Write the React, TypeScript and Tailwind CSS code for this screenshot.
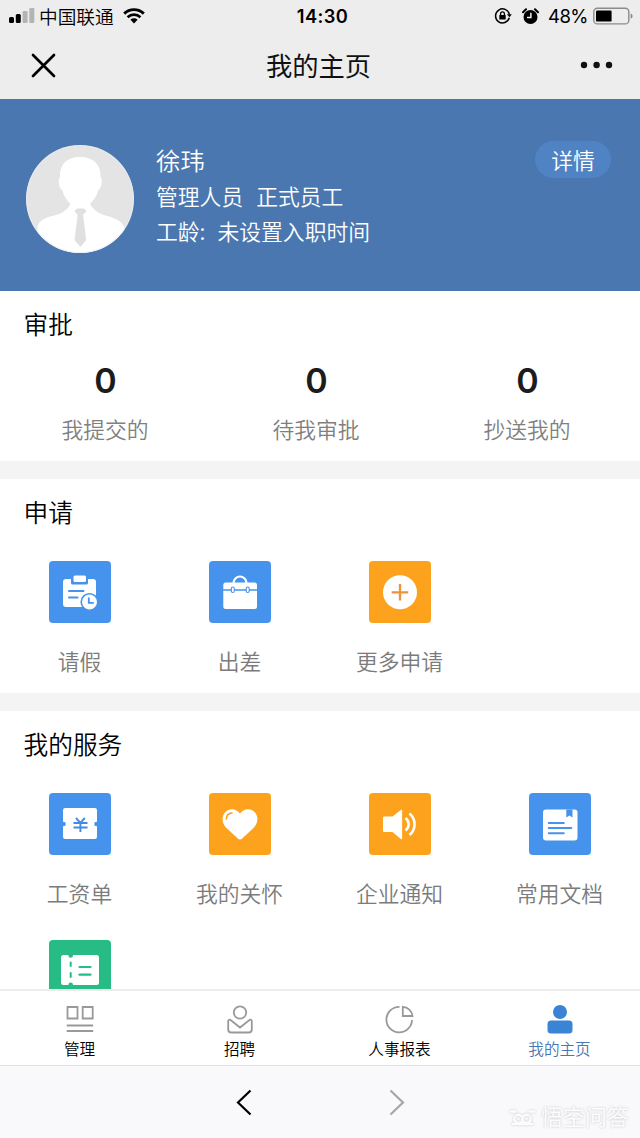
import type { ReactNode } from 'react';

const BLUE = '#4593ec';
const ORANGE = '#fca21d';

function StatusBar() {
  return (
    <div className="flex h-8 items-center justify-between pl-[9px] pr-[7px] text-black">
      <div className="flex w-[200px] items-center">
        <svg width="26" height="16" viewBox="0 0 26 16">
          <rect x="0" y="9" width="5" height="6" rx="1.5" fill="#000" />
          <rect x="6.8" y="6" width="5" height="9" rx="1.5" fill="#000" />
          <rect x="13.6" y="3" width="5" height="12" rx="1.2" fill="#b4b4b4" />
          <rect x="20.3" y="0" width="5" height="15" rx="1.2" fill="#b4b4b4" />
        </svg>
        <span className="ml-[4px] h-8 text-[18.7px] font-[350] leading-[31px]">中国联通</span>
        <svg className="ml-[9px]" width="22" height="16" viewBox="0 0 22 16" fill="none" stroke="#000">
          <path d="M1.2 5.6a14 14 0 0 1 19.6 0" strokeWidth="2.9" />
          <path d="M4.6 9.2a9.2 9.2 0 0 1 12.8 0" strokeWidth="2.7" />
          <path d="M11 15.4 7.4 11.8a5.2 5.2 0 0 1 7.2 0Z" fill="#000" stroke="none" />
        </svg>
      </div>
      <span className="pl-[3px] font-[Inter] text-[18.3px] font-semibold leading-8 tracking-[0.4px]">14:30</span>
      <div className="flex w-[200px] items-center justify-end">
        <svg width="18" height="16" viewBox="0 0 18 16" fill="none" stroke="#000" strokeWidth="1.5">
          <path d="M15.3 9.8a7 7 0 1 1 .1-3.4" />
          <path d="m12.8 6.2 2.8 3.1 2.2-3.1Z" fill="#000" stroke="none" />
          <rect x="5.3" y="6.9" width="6.4" height="4.6" rx=".5" fill="#000" stroke="none" />
          <path d="M6.6 7.2V5.8a1.9 1.9 0 0 1 3.8 0v1.4" strokeWidth="1.3" />
        </svg>
        <svg className="ml-[10px]" width="17" height="17" viewBox="0 0 17 17" fill="none">
          <circle cx="8.5" cy="9" r="7" fill="#000" />
          <path d="M8.9 4.8v4.6H5" stroke="#ededed" strokeWidth="1.5" />
          <path d="M1 4.2 4 1.2M16 4.2l-3-3" stroke="#000" strokeWidth="2" strokeLinecap="round" />
        </svg>
        <span className="ml-[9px] font-[Inter] text-[18.5px] leading-8 tracking-[-0.5px]">48%</span>
        <svg className="ml-[5px]" width="40" height="18" viewBox="0 0 40 18">
          <rect x=".8" y="1.3" width="35" height="15.6" rx="3.5" fill="none" stroke="#8c8c8c" strokeWidth="1.4" />
          <rect x="3" y="3.6" width="15.6" height="11" rx="1.2" fill="#000" />
          <path d="M37.6 6.4c2.6.6 2.6 4.8 0 5.4Z" fill="#8c8c8c" />
        </svg>
      </div>
    </div>
  );
}

function NavBar() {
  return (
    <div className="flex h-[66.5px] items-center justify-between pl-[31px] pr-[27px]">
      <svg width="25" height="25" viewBox="0 0 25 25" stroke="#000" strokeWidth="2.7" strokeLinecap="round">
        <path d="m2 2 21 21M23 2 2 23" />
      </svg>
      <h1 className="pl-px text-[26.3px] font-normal leading-8 text-[#111]">我的主页</h1>
      <svg width="33" height="8" viewBox="0 0 33 8" fill="#111">
        <circle cx="4" cy="4" r="3.2" />
        <circle cx="16.6" cy="4" r="3.2" />
        <circle cx="29" cy="4" r="3.2" />
      </svg>
    </div>
  );
}

function Avatar() {
  return (
    <svg width="108" height="108" viewBox="0 0 108 108">
      <defs>
        <clipPath id="avatar-clip">
          <circle cx="54" cy="54" r="54" />
        </clipPath>
      </defs>
      <g clipPath="url(#avatar-clip)">
        <rect width="108" height="108" fill="#e4e4e5" />
        <path
          fill="#fff"
          d="M54 12c-14 0-20.500 8-20 20-2.500 2-1 12 2.500 13.500 1.500 6.500 5 10.500 8 13.500-2 4-5 7-10 9.500-8 3-18 3-23 12V108H98V81c-6-9-16-9-24-12.500-5-2.500-8-5.500-10-9.500 3-3 6.500-7 8-13.500 3.500-1.500 5-11.500 2.500-13.500C75 20 68 12 54 12Z"
        />
        <path fill="#e0e0e1" d="M51 63.500h7l2.500 2.800-3.400 3.400 3 25.300-5.600 7-6-7 3.200-25.300-3.300-3.400Z" />
        <circle cx="54" cy="54" r="53.600" fill="none" stroke="#e9ecf0" strokeWidth=".8" />
      </g>
    </svg>
  );
}

function Profile() {
  return (
    <section className="flex h-[192.5px] items-start bg-[#4a77b0] pl-[26px] pr-[29px] text-[21.8px] font-[350] text-white">
      <div className="mt-[46px]">
        <Avatar />
      </div>
      <div className="ml-[22px] mt-[43px] flex-1">
        <p className="text-[24.3px] leading-9">徐玮</p>
        <p className="flex h-[37px] items-center gap-[13px] leading-9">
          <span>管理人员</span>
          <span>正式员工</span>
        </p>
        <p className="flex h-8 items-center gap-[12px] leading-8">
          <span>工龄:</span>
          <span>未设置入职时间</span>
        </p>
      </div>
      <button className="mt-[42px] h-[37px] w-[76px] rounded-full bg-[#5083c4] leading-[37px]">详情</button>
    </section>
  );
}

function Section({ title, className, children }: { title: string; className: string; children: ReactNode }) {
  return (
    <section className={`bg-white ${className}`}>
      <h2 className="pl-[23.5px] pt-[14px] text-[24.7px] font-[350] leading-9 text-black">{title}</h2>
      {children}
    </section>
  );
}

function Stat({ value, label }: { value: number; label: string }) {
  return (
    <div className="flex flex-col items-center">
      <span className="font-[Inter] text-[34px] font-semibold leading-[40px] text-[#1c1c1c]">{value}</span>
      <span className="mr-px mt-[11px] text-[21.8px] font-[350] leading-[34px] text-[#808080]">{label}</span>
    </div>
  );
}

function Tile({ bg, label, children }: { bg: string; label?: string; children: ReactNode }) {
  return (
    <div className="flex flex-col items-center">
      <div className={`size-[62px] rounded-[4px] ${bg}`}>
        <svg width="62" height="62" viewBox="0 0 62 62" fill="none">
          {children}
        </svg>
      </div>
      {label && <span className="mr-px mt-[21px] text-[21.8px] font-[350] leading-[34px] text-[#7b7b7b]">{label}</span>}
    </div>
  );
}

function LeaveIcon() {
  return (
    <>
      <rect x="14" y="18" width="33" height="28" rx="3" fill="#fff" />
      <path d="M22 17h17v5a1.500 1.500 0 0 1-1.500 1.500h-14A1.500 1.500 0 0 1 22 22Z" fill={BLUE} />
      <rect x="24.500" y="14.500" width="12.500" height="6.500" rx="1.500" fill="#fff" />
      <path d="M20 30h14.500M20 36.500h8.500" stroke={BLUE} strokeWidth="2" strokeLinecap="round" />
      <circle cx="40.500" cy="41" r="8.300" fill="#fff" stroke={BLUE} strokeWidth="1.600" />
      <path d="M39.800 36.500v5.300h5" stroke={BLUE} strokeWidth="1.800" />
    </>
  );
}

function BriefcaseIcon() {
  return (
    <>
      <path d="M24.500 23v-1a6.500 6.500 0 0 1 13 0v1" stroke="#fff" strokeWidth="2.200" />
      <rect x="14.300" y="21.500" width="33.700" height="26.500" rx="2.500" fill="#fff" />
      <path d="M14 29h34" stroke={BLUE} strokeWidth="1.500" />
      <rect x="22.300" y="26" width="3" height="5.500" rx="1.500" fill="#fff" stroke={BLUE} strokeWidth="1.100" />
      <rect x="37.200" y="26" width="3" height="5.500" rx="1.500" fill="#fff" stroke={BLUE} strokeWidth="1.100" />
    </>
  );
}

function PlusIcon() {
  return (
    <>
      <circle cx="31" cy="31.300" r="17" fill="#fff" />
      <path d="M31 23v16.500M22.700 31.300h16.500" stroke="#f0913c" strokeWidth="2.300" />
    </>
  );
}

function PayslipIcon() {
  return (
    <>
      <rect x="14" y="15" width="34" height="31" rx="2.200" fill="#fff" />
      <circle cx="14.500" cy="31" r="2.300" fill={BLUE} />
      <circle cx="47.500" cy="31" r="2.300" fill={BLUE} />
      <path d="m27 25 4.300 4.800L35.800 25M24.500 30h14M24.500 34.500h14M31.400 29.500V39" stroke="#448be0" strokeWidth="1.900" />
    </>
  );
}

function HeartIcon() {
  return (
    <>
      <path
        fill="#fff"
        d="M31 20.800C34.500 15 42 14.800 46 19.500c3.800 4.600 2.800 10.500-1 15L33.500 45.200a3.500 3.500 0 0 1-5 0L17 34.500c-4-4.500-4.800-10.400-1-15 4-4.700 11.500-4.500 15 1.300Z"
      />
      <path d="M17.300 26c.200-3.500 2.200-5.800 5.700-6" stroke={ORANGE} strokeWidth="1.600" strokeLinecap="round" />
    </>
  );
}

function SpeakerIcon() {
  return (
    <>
      <path
        fill="#fff"
        d="M15 23.500h8.500l8.300-6.600a.8.8 0 0 1 1.300.6v28a.8.8 0 0 1-1.300.6l-8.300-7.100H15a1 1 0 0 1-1-1V24.500a1 1 0 0 1 1-1Z"
      />
      <path d="M36.500 25a7.800 7.800 0 0 1 0 12.500M40.500 20.500a14 14 0 0 1 0 21.500" stroke="#fff" strokeWidth="2.600" />
    </>
  );
}

function DocumentIcon() {
  return (
    <>
      <rect x="14" y="16.500" width="34.500" height="31" rx="3" fill="#fff" />
      <path d="M37.300 16.500h6.200v8l-3.100-2-3.100 2Z" fill={BLUE} />
      <path d="M19.800 30h15M19.800 35h22.500M19.800 40.300h15" stroke={BLUE} strokeWidth="2" strokeLinecap="round" />
    </>
  );
}

function TicketIcon() {
  return (
    <>
      <rect x="12" y="15" width="38" height="30" rx="2.500" fill="#fff" />
      <circle cx="21.700" cy="15.500" r="2.300" fill="#27bc86" />
      <circle cx="21.700" cy="44.800" r="2.300" fill="#27bc86" />
      <path d="M21.700 22.500v3.500M21.700 33v4" stroke="#27bc86" strokeWidth="2" strokeLinecap="round" />
      <path d="M30.500 27h11M30.500 34.700h11" stroke="#27bc86" strokeWidth="2.200" strokeLinecap="round" />
    </>
  );
}

function Tab({ label, active, children }: { label: string; active?: boolean; children: ReactNode }) {
  return (
    <div className="flex flex-col items-center pt-[14px]">
      <svg width="32" height="32" viewBox="0 0 32 32" fill="none" stroke="#999" strokeWidth="1.800">
        {children}
      </svg>
      <span className={`mr-px text-[15.6px] font-[350] leading-[22px] ${active ? 'text-[#4a77b0]' : 'text-black'}`}>{label}</span>
    </div>
  );
}

function TabBar() {
  return (
    <nav className="grid h-[76px] shrink-0 grid-cols-4 border-t-2 border-[#ececec] bg-white">
      <Tab label="管理">
        <path d="M3.500 2h10v11.500h-10ZM18.700 2h10v11.500h-10ZM2.700 20.500h26.500M2.700 26h26.500" />
      </Tab>
      <Tab label="招聘">
        <circle cx="16" cy="7.500" r="6.200" />
        <path d="M6.200 14.800 16 22.500l9.800-7.700c1.200-.6 2 .5 2 1.700v8a3 3 0 0 1-3 3H7.200a3 3 0 0 1-3-3v-8c0-1.200.8-2.300 2-1.700Z" />
      </Tab>
      <Tab label="人事报表">
        <path d="M15.500 1.800A12.800 12.800 0 1 0 28 15" />
        <path d="M18.800 1.800V11H28.500A10.300 10.300 0 0 0 18.800 1.800Z" />
      </Tab>
      <Tab label="我的主页" active>
        <circle cx="16" cy="7" r="7" fill="#3b84d5" stroke="none" />
        <rect x="3.500" y="15.500" width="25" height="13" rx="3.500" fill="#3b84d5" stroke="none" />
      </Tab>
    </nav>
  );
}

function BrowserBar() {
  return (
    <div className="relative flex h-[73px] shrink-0 justify-center border-t border-[#e2e2e8] bg-[#f9f9fc] pt-[23px]">
      <div className="flex gap-[137px]">
        <svg width="16" height="27" viewBox="0 0 16 27" fill="none" stroke="#000" strokeWidth="2.200">
          <path d="M14.500 1.500 2 13.500l12.500 12" />
        </svg>
        <svg width="16" height="27" viewBox="0 0 16 27" fill="none" stroke="#a6a6a8" strokeWidth="2.200">
          <path d="m1.500 1.500 12.500 12-12.500 12" />
        </svg>
      </div>
      <div className="absolute bottom-[9px] right-[11px] flex items-center gap-[5px] text-[#fcfcfd] [filter:drop-shadow(0_0_1px_#c8c8ca)]">
        <svg className="mt-[5px]" width="27" height="17" viewBox="0 0 27 17" fill="none" stroke="#fcfcfd" strokeWidth="2.400" strokeLinecap="round">
          <path d="M1.500 2.500h5M20.500 2.500h5M13.500 8.500a4.200 4.200 0 1 1-8 0M13.500 8.500a4.200 4.200 0 1 0 8 0M7.500 6.500a4 4 0 0 1 6 2 4 4 0 0 1 6-2M3.500 15h20" />
        </svg>
        <span className="text-[22px] leading-7">悟空问答</span>
      </div>
    </div>
  );
}

export default function App() {
  return (
    <div className="flex h-[1138px] w-[640px] flex-col overflow-hidden bg-[#f4f4f4] font-['Noto_Sans_CJK_SC',sans-serif]">
      <header className="shrink-0 bg-[#ededed]">
        <StatusBar />
        <NavBar />
      </header>
      <main className="flex min-h-0 flex-1 flex-col gap-[18px] overflow-hidden">
        <div className="shrink-0">
          <Profile />
          <Section title="审批" className="h-[170px]">
            <div className="mt-[20px] grid w-[633px] grid-cols-3">
              <Stat value={0} label="我提交的" />
              <Stat value={0} label="待我审批" />
              <Stat value={0} label="抄送我的" />
            </div>
          </Section>
        </div>
        <Section title="申请" className="h-[214px] shrink-0">
          <div className="mt-[32px] grid grid-cols-4">
            <Tile bg="bg-[#4593ec]" label="请假"><LeaveIcon /></Tile>
            <Tile bg="bg-[#4593ec]" label="出差"><BriefcaseIcon /></Tile>
            <Tile bg="bg-[#fca21d]" label="更多申请"><PlusIcon /></Tile>
          </div>
        </Section>
        <Section title="我的服务" className="shrink-0">
          <div className="mt-[32px] grid grid-cols-4 gap-y-[30px]">
            <Tile bg="bg-[#4593ec]" label="工资单"><PayslipIcon /></Tile>
            <Tile bg="bg-[#fca21d]" label="我的关怀"><HeartIcon /></Tile>
            <Tile bg="bg-[#fca21d]" label="企业通知"><SpeakerIcon /></Tile>
            <Tile bg="bg-[#4593ec]" label="常用文档"><DocumentIcon /></Tile>
            <Tile bg="bg-[#27bc86]"><TicketIcon /></Tile>
          </div>
        </Section>
      </main>
      <TabBar />
      <BrowserBar />
    </div>
  );
}
